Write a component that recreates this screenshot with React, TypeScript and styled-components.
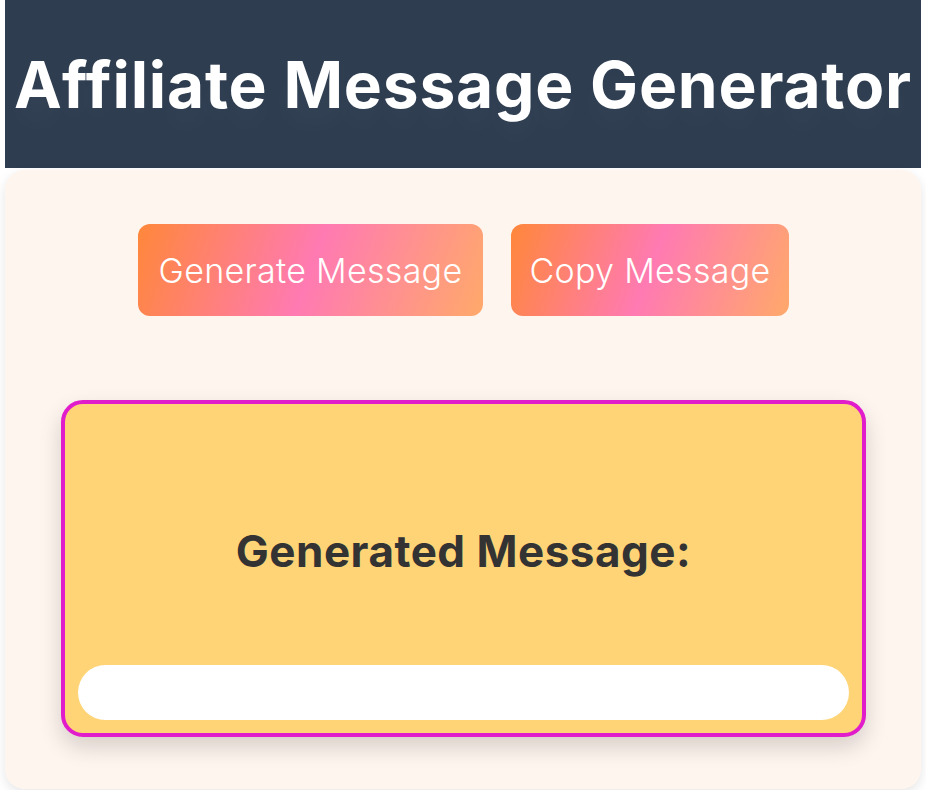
import styled, { createGlobalStyle } from 'styled-components';

const GlobalStyle = createGlobalStyle`
    html, body {
        margin: 0;
        padding: 0;
        background: #ffffff;
        font-family: Inter, 'Noto Sans', Arial, sans-serif;
    }
`;

const Page = styled.div`
    padding: 0 5px 2px;
    display: flex;
    flex-direction: column;
    gap: 2px;
`;

const Header = styled.header`
    background: #2e3d50;
    height: 168px;
    display: flex;
    align-items: center;
    justify-content: center;
`;

const Title = styled.h1`
    margin: 0;
    color: #ffffff;
    font-size: 64px;
    font-weight: 700;
    letter-spacing: 0.8px;
    text-shadow: 0 18px 30px rgba(255, 255, 255, 0.04);
`;

const Card = styled.main`
    background: #fff5ef;
    border-radius: 20px;
    box-shadow: 0 4px 12px rgba(0, 0, 0, 0.1);
    padding: 54px 55px 52px 56px;
    display: flex;
    flex-direction: column;
    gap: 84px;
`;

const ButtonRow = styled.div`
    display: flex;
    justify-content: center;
    gap: 28px;
`;

const GradientButton = styled.button<{ width: number }>`
    width: ${({ width }) => width}px;
    height: 92px;
    padding: 0;
    border: none;
    border-radius: 12px;
    color: #ffffff;
    font-family: Inter, 'Noto Sans', Arial, sans-serif;
    font-size: 34px;
    font-weight: 300;
    letter-spacing: 0.3px;
    background: linear-gradient(110deg, #ff873a 0%, #ff7ab2 50%, #ffa96a 100%);
    cursor: pointer;
`;

const OutputBox = styled.section`
    background: #ffd476;
    border: 4px solid #e01ccb;
    border-radius: 22px;
    box-shadow: 0 10px 22px rgba(0, 0, 0, 0.16);
    padding: 13px;
    display: flex;
    flex-direction: column;
`;

const OutputTitle = styled.h2`
    margin: 104px 0 84px;
    height: 60px;
    line-height: 60px;
    text-align: center;
    color: #333333;
    font-size: 44px;
    font-weight: 700;
    letter-spacing: 0.5px;
`;

const MessageField = styled.input`
    height: 55px;
    border: none;
    border-radius: 28px;
    background: #ffffff;
    padding: 0 24px;
    font-size: 20px;
    outline: none;
`;

const App = () => {
    return (
        <Page>
            <GlobalStyle />
            <Header>
                <Title>Affiliate Message Generator</Title>
            </Header>
            <Card>
                <ButtonRow>
                    <GradientButton width={345}>Generate Message</GradientButton>
                    <GradientButton width={278}>Copy Message</GradientButton>
                </ButtonRow>
                <OutputBox>
                    <OutputTitle>Generated Message:</OutputTitle>
                    <MessageField readOnly value="" />
                </OutputBox>
            </Card>
        </Page>
    );
};

export default App;
